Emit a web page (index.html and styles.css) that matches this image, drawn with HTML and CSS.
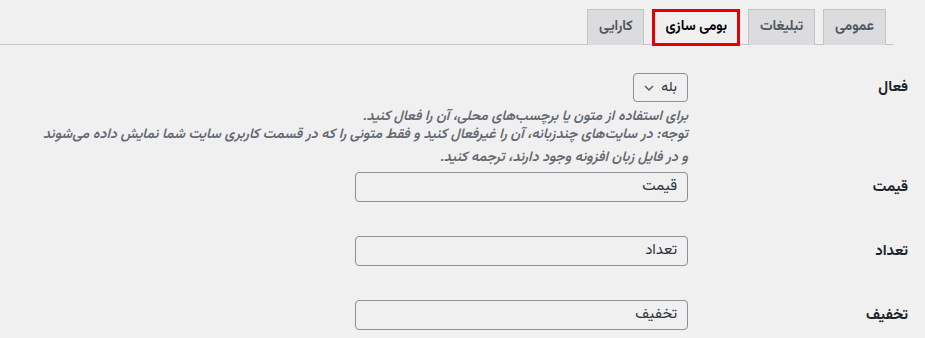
FILE: index.html
```html
<!DOCTYPE html>
<html lang="fa" dir="rtl">
<head>
<meta charset="utf-8">
<title>تنظیمات</title>
<link rel="stylesheet" href="styles.css">
</head>
<body>
<div class="wrap">
  <nav class="tabs">
    <a class="tab">عمومی</a>
    <a class="tab">تبلیغات</a>
    <a class="tab tab-active">بومی سازی</a>
    <a class="tab">کارایی</a>
  </nav>
  <div class="form">
    <div class="row row-first">
      <div class="label label-select">فعال</div>
      <div class="field">
        <div class="select">
          <span>بله</span>
          <svg class="chev" width="10" height="6" viewBox="0 0 10 6"><path d="M1 1l4 4 4-4" fill="none" stroke="#50575e" stroke-width="1.4"/></svg>
        </div>
        <p class="desc">برای استفاده از متون یا برچسب‌های محلی، آن را فعال کنید.<br>توجه: در سایت‌های چندزبانه، آن را غیرفعال کنید و فقط متونی را که در قسمت کاربری سایت شما نمایش داده می‌شوند</p>
        <p class="desc desc-last">و در فایل زبان افزونه وجود دارند، ترجمه کنید.</p>
      </div>
    </div>
    <div class="row">
      <div class="label">قیمت</div>
      <div class="field"><div class="input">قیمت</div></div>
    </div>
    <div class="row">
      <div class="label">تعداد</div>
      <div class="field"><div class="input">تعداد</div></div>
    </div>
    <div class="row">
      <div class="label">تخفیف</div>
      <div class="field"><div class="input">تخفیف</div></div>
    </div>
  </div>
</div>
</body>
</html>
```
FILE: styles.css
```css
html, body {
  margin: 0;
  padding: 0;
  background: #f0f0f1;
}
body {
  font-family: "Vazirmatn", "Vazir", "Noto Sans Arabic", "DejaVu Sans", sans-serif;
  color: #1d2327;
  font-size: 14px;
}
.wrap {
  width: 925px;
  height: 338px;
  overflow: hidden;
}
.tabs {
  display: flex;
  gap: 8px;
  margin: 9px 32px 0 0;
  padding: 0 7px 0 0;
  border-bottom: 1px solid #c3c4c7;
  height: 35px;
}
.tab {
  display: block;
  box-sizing: border-box;
  height: 36px;
  padding: 0 11px;
  line-height: 34px;
  font-size: 14px;
  font-weight: 700;
  color: #50575e;
  background: #dcdcde;
  border: 1px solid #c3c4c7;
  border-bottom: 0;
}
.tab-active {
  background: #f0f0f1;
  color: #000;
  border: 3px solid #e60000;
  height: 37px;
  line-height: 31px;
  padding: 0 10px;
}
.form {
  padding: 0 17px 0 0;
}
.row {
  display: flex;
  align-items: center;
}
.row-first {
  align-items: flex-start;
  margin-top: 28px;
}
.row + .row {
  margin-top: 34px;
}
.row-first + .row {
  margin-top: 5px;
}
.label {
  width: 220px;
  flex: none;
  font-weight: 700;
  font-size: 15px;
  color: #1d2327;
}
.label-select {
  line-height: 29px;
}
.field {
  flex: 1;
}
.select {
  box-sizing: border-box;
  width: 55px;
  height: 29px;
  border: 1px solid #8c8f94;
  border-radius: 4px;
  display: flex;
  align-items: center;
  justify-content: space-between;
  padding: 0 10px;
  font-size: 14px;
  color: #2c3338;
}
.chev {
  display: block;
}
.desc {
  margin: 6px 0 0;
  font-size: 14px;
  line-height: 18px;
  font-style: italic;
  color: #646970;
  font-weight: 600;
}
.desc-last {
  margin-top: 5px;
}
.input {
  box-sizing: border-box;
  width: 333px;
  height: 30px;
  border: 1px solid #8c8f94;
  border-radius: 4px;
  padding: 0 10px;
  line-height: 28px;
  font-size: 15px;
  color: #2c3338;
}
```
